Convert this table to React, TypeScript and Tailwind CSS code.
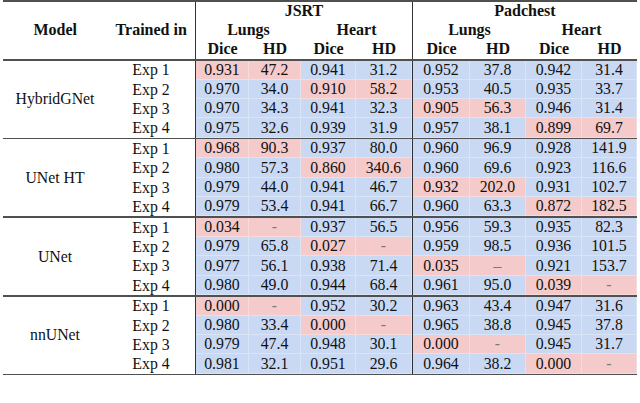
import React from "react";

type Row = { exp: string; vals: string[] };
type Group = { model: string; rows: Row[] };

const groups: Group[] = [
  {
    model: "HybridGNet",
    rows: [
      { exp: "Exp 1", vals: ["0.931", "47.2", "0.941", "31.2", "0.952", "37.8", "0.942", "31.4"] },
      { exp: "Exp 2", vals: ["0.970", "34.0", "0.910", "58.2", "0.953", "40.5", "0.935", "33.7"] },
      { exp: "Exp 3", vals: ["0.970", "34.3", "0.941", "32.3", "0.905", "56.3", "0.946", "31.4"] },
      { exp: "Exp 4", vals: ["0.975", "32.6", "0.939", "31.9", "0.957", "38.1", "0.899", "69.7"] },
    ],
  },
  {
    model: "UNet HT",
    rows: [
      { exp: "Exp 1", vals: ["0.968", "90.3", "0.937", "80.0", "0.960", "96.9", "0.928", "141.9"] },
      { exp: "Exp 2", vals: ["0.980", "57.3", "0.860", "340.6", "0.960", "69.6", "0.923", "116.6"] },
      { exp: "Exp 3", vals: ["0.979", "44.0", "0.941", "46.7", "0.932", "202.0", "0.931", "102.7"] },
      { exp: "Exp 4", vals: ["0.979", "53.4", "0.941", "66.7", "0.960", "63.3", "0.872", "182.5"] },
    ],
  },
  {
    model: "UNet",
    rows: [
      { exp: "Exp 1", vals: ["0.034", "-", "0.937", "56.5", "0.956", "59.3", "0.935", "82.3"] },
      { exp: "Exp 2", vals: ["0.979", "65.8", "0.027", "-", "0.959", "98.5", "0.936", "101.5"] },
      { exp: "Exp 3", vals: ["0.977", "56.1", "0.938", "71.4", "0.035", "–", "0.921", "153.7"] },
      { exp: "Exp 4", vals: ["0.980", "49.0", "0.944", "68.4", "0.961", "95.0", "0.039", "-"] },
    ],
  },
  {
    model: "nnUNet",
    rows: [
      { exp: "Exp 1", vals: ["0.000", "-", "0.952", "30.2", "0.963", "43.4", "0.947", "31.6"] },
      { exp: "Exp 2", vals: ["0.980", "33.4", "0.000", "-", "0.965", "38.8", "0.945", "37.8"] },
      { exp: "Exp 3", vals: ["0.979", "47.4", "0.948", "30.1", "0.000", "-", "0.945", "31.7"] },
      { exp: "Exp 4", vals: ["0.981", "32.1", "0.951", "29.6", "0.964", "38.2", "0.000", "-"] },
    ],
  },
];

const widths = ["w-[53px]", "w-[52px]", "w-[55px]", "w-[56px]", "w-[57px]", "w-[56px]", "w-[56px]", "w-[55px]"];

function Cell({ v, w, pink }: { v: string; w: string; pink: boolean }) {
  const isDash = v === "-" || v === "–";
  return (
    <div
      className={`${w} h-full flex items-center justify-center border-r border-b border-white/30 ${
        pink ? "bg-[#f4caca]" : "bg-[#c9d9f4]"
      } ${isDash ? "text-[#7a7a7a]" : "text-[#111]"}`}
    >
      {v}
    </div>
  );
}

function DataRow({ row, idx }: { row: Row; idx: number }) {
  return (
    <div className="flex h-[19.3px]">
      <div className="w-[88px] flex items-center justify-center text-[#111]">{row.exp}</div>
      <div className="flex border-l border-[#333]">
        {row.vals.slice(0, 4).map((v, i) => (
          <Cell key={i} v={v} w={widths[i]} pink={Math.floor(i / 2) === idx} />
        ))}
      </div>
      <div className="flex border-l border-[#333]">
        {row.vals.slice(4).map((v, i) => (
          <Cell key={i} v={v} w={widths[i + 4]} pink={Math.floor(i / 2) + 2 === idx} />
        ))}
      </div>
    </div>
  );
}

const HLine = () => <div className="h-[1.5px] bg-[#505050]" />;

export default function App() {
  return (
    <div
      className="w-[640px] h-[403px] bg-white px-[3px] text-[15.8px] leading-none"
      style={{ fontFamily: '"Liberation Serif", "Times New Roman", serif' }}
    >
      <HLine />
      <div className="flex h-[57.5px] font-bold text-[#111] text-[16px]">
        <div className="w-[105px] flex items-center justify-center">Model</div>
        <div className="w-[88px] flex items-center justify-center">Trained in</div>
        <div className="w-[217px] border-l border-[#333] flex flex-col">
          <div className="flex-1 flex items-center justify-center">JSRT</div>
          <div className="flex-1 flex">
            <div className="w-[105px] flex items-center justify-center">Lungs</div>
            <div className="w-[111px] flex items-center justify-center">Heart</div>
          </div>
          <div className="flex-1 flex">
            <div className="w-[53px] flex items-center justify-center">Dice</div>
            <div className="w-[52px] flex items-center justify-center">HD</div>
            <div className="w-[55px] flex items-center justify-center">Dice</div>
            <div className="w-[56px] flex items-center justify-center">HD</div>
          </div>
        </div>
        <div className="w-[225px] border-l border-[#333] flex flex-col">
          <div className="flex-1 flex items-center justify-center">Padchest</div>
          <div className="flex-1 flex">
            <div className="w-[113px] flex items-center justify-center">Lungs</div>
            <div className="w-[111px] flex items-center justify-center">Heart</div>
          </div>
          <div className="flex-1 flex">
            <div className="w-[57px] flex items-center justify-center">Dice</div>
            <div className="w-[56px] flex items-center justify-center">HD</div>
            <div className="w-[56px] flex items-center justify-center">Dice</div>
            <div className="w-[55px] flex items-center justify-center">HD</div>
          </div>
        </div>
      </div>
      {groups.map((g, gi) => (
        <React.Fragment key={gi}>
          <HLine />
          <div className="flex">
            <div className="w-[105px] flex items-center justify-center text-[#111]">{g.model}</div>
            <div className="flex flex-col">
              {g.rows.map((r, ri) => (
                <DataRow key={ri} row={r} idx={ri} />
              ))}
            </div>
          </div>
        </React.Fragment>
      ))}
      <HLine />
    </div>
  );
}
